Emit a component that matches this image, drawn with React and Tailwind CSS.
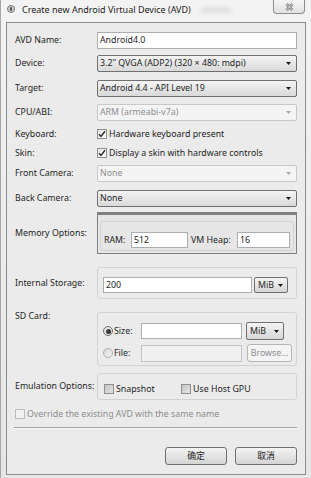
import React from 'react'

function Arrow({ disabled }) {
  return (
    <svg width="5" height="3" viewBox="0 0 5 3" className="shrink-0">
      <polygon points="0,0 5,0 2.5,3" fill={disabled ? '#a8a8a8' : '#1a1a1a'} />
    </svg>
  )
}

function TextBox({ value = '', disabled, className = '' }) {
  return (
    <div
      className={`flex items-center border px-[2px] ${
        disabled ? 'border-[#c4c4c4] bg-[#f0f0f0]' : 'border-[#abadb3] bg-white'
      } ${className}`}
    >
      <span className="leading-none">{value}</span>
    </div>
  )
}

function Select({ value, disabled }) {
  return (
    <div
      className={`flex h-[17px] items-center justify-between rounded-[2px] border pl-[2px] pr-[5px] ${
        disabled
          ? 'border-[#c8c8c8] bg-[#f4f4f4] text-[#8d8d8d]'
          : 'border-[#707070] bg-gradient-to-b from-[#f4f4f4] to-[#d9d9d9] text-[#1e1e1e]'
      }`}
    >
      <span className="leading-none">{value}</span>
      <Arrow disabled={disabled} />
    </div>
  )
}

function Combo({ className = '' }) {
  return (
    <div
      className={`flex items-center justify-between rounded-[2px] border border-[#707070] bg-gradient-to-b from-[#f4f4f4] to-[#d6d6d6] pl-[3px] pr-[4px] ${className}`}
    >
      <span className="leading-none">MiB</span>
      <Arrow />
    </div>
  )
}

function Check({ checked, disabled }) {
  return (
    <div
      className={`flex h-[10px] w-[10px] shrink-0 items-center justify-center border ${
        disabled
          ? 'border-[#bcbcbc] bg-[#f2f2f2]'
          : checked
          ? 'border-[#8e8f8f] bg-gradient-to-br from-[#e2e2e2] to-[#ffffff]'
          : 'border-[#8e8f8f] bg-gradient-to-br from-[#c4c4c4] to-[#e4e4e4]'
      }`}
    >
      {checked && (
        <svg width="8" height="8" viewBox="0 0 8 8">
          <path d="M1 4.2 L3 6.4 L7 1.2" fill="none" stroke="#2a2a2a" strokeWidth="1.4" />
        </svg>
      )}
    </div>
  )
}

function Radio({ checked }) {
  return (
    <div
      className={`flex h-[10px] w-[10px] shrink-0 items-center justify-center rounded-full border ${
        checked ? 'border-[#6f6f6f] bg-[#e6e6e6]' : 'border-[#b0b0b0] bg-gradient-to-br from-[#d8d8d8] to-[#f4f4f4]'
      }`}
    >
      {checked && <div className="h-[5px] w-[5px] rounded-full bg-gradient-to-br from-[#555] to-[#1e1e1e]" />}
    </div>
  )
}

function Row({ label, top = 0, align = 'items-center', children }) {
  return (
    <div className={`flex ${align}`} style={{ marginTop: top }}>
      <div className="w-[82px] shrink-0 leading-none">{label}</div>
      <div className="w-[200px] shrink-0">{children}</div>
    </div>
  )
}

function Button({ children }) {
  return (
    <div className="flex h-[18px] w-[62px] items-center justify-center rounded-[3px] border border-[#707070] bg-gradient-to-b from-[#f4f4f4] to-[#d4d4d4] leading-none">
      {children}
    </div>
  )
}

export default function App() {
  return (
    <div className="flex h-[478px] w-[311px] flex-col overflow-hidden border-l border-[#a6a6a6] bg-gradient-to-b from-[#f3f3f3] to-[#e6e6e6] font-['Noto_Sans','Noto_Sans_CJK_SC',sans-serif] text-[8.8px] text-[#1e1e1e]">
      {/* Title bar */}
      <div className="flex h-[22px] shrink-0 items-start">
        <div className="mt-[5px] ml-[6px] flex h-[8px] w-[8px] items-center justify-center rounded-full border border-[#7a7a7a] bg-[#cfcfcf]">
          <div className="h-[4px] w-[2px] rounded-full bg-[#555]" />
        </div>
        <span className="mt-[5px] ml-[7px] text-[9px] leading-none text-[#222]">Create new Android Virtual Device (AVD)</span>
        <span className="mt-[8px] ml-[10px] h-[4px] w-[30px] rounded-full bg-[#d6d6d6] blur-[2px]" />
        <div className="ml-auto mr-[6px] flex h-[14px] w-[32px] items-center justify-center rounded-b-[4px] border border-t-0 border-[#8d8d8d] bg-gradient-to-b from-[#f6f6f6] to-[#e2e2e2]">
          <svg width="9" height="8" viewBox="0 0 9 8">
            <path d="M1.5 1 L7.5 7 M7.5 1 L1.5 7" stroke="#7c7c7c" strokeWidth="2.6" />
            <path d="M1.5 1 L7.5 7 M7.5 1 L1.5 7" stroke="#f4f4f4" strokeWidth="0.9" />
          </svg>
        </div>
      </div>

      {/* Content panel */}
      <div className="ml-[5px] flex h-[453px] w-[300px] flex-col border border-[#8c8c8c] bg-[#ebebeb] pl-[8px] pt-[9px]">
        <Row label="AVD Name:">
          <TextBox value="Android4.0" className="h-[17px]" />
        </Row>
        <Row label="Device:" top={6}>
          <Select value={'3.2" QVGA (ADP2) (320 × 480: mdpi)'} />
        </Row>
        <Row label="Target:" top={8}>
          <Select value="Android 4.4 - API Level 19" />
        </Row>
        <Row label="CPU/ABI:" top={7}>
          <Select value="ARM (armeabi-v7a)" disabled />
        </Row>
        <Row label="Keyboard:" top={6}>
          <div className="flex h-[14px] items-center gap-[2px]">
            <Check checked />
            <span className="leading-none">Hardware keyboard present</span>
          </div>
        </Row>
        <Row label="Skin:" top={5}>
          <div className="flex h-[14px] items-center gap-[2px]">
            <Check checked />
            <span className="leading-none">Display a skin with hardware controls</span>
          </div>
        </Row>
        <Row label="Front Camera:" top={5}>
          <Select value="None" disabled />
        </Row>
        <Row label="Back Camera:" top={8}>
          <Select value="None" />
        </Row>

        <Row label="Memory Options:" top={5}>
          <div className="flex h-[42px] flex-col border border-t-[3px] border-[#7f7f7f] bg-[#e6e6e6] px-[2px] pt-[6px]">
            <div className="flex h-[30px] items-end rounded-[3px] border border-[#d3d3d3] pb-[2px] pl-[3px]">
              <div className="flex h-[16px] items-center">
                <span className="w-[27px] leading-none">RAM:</span>
                <TextBox value="512" className="h-[16px] w-[57px]" />
                <span className="ml-[3px] w-[46px] leading-none">VM Heap:</span>
                <TextBox value="16" className="h-[16px] w-[53px]" />
              </div>
            </div>
          </div>
        </Row>

        <Row label="Internal Storage:" top={13}>
          <div className="flex h-[32px] items-end rounded-[3px] border border-[#d3d3d3] pb-[5px] pl-[5px]">
            <TextBox value="200" className="h-[16px] w-[149px]" />
            <Combo className="ml-[2px] h-[16px] w-[34px]" />
          </div>
        </Row>

        <Row label="SD Card:" top={13} align="items-start">
          <div className="flex h-[54px] flex-col gap-[4px] rounded-[3px] border border-[#d3d3d3] pl-[5px] pt-[9px]">
            <div className="flex h-[18px] items-center">
              <div className="flex w-[38px] items-center gap-[1px]">
                <Radio checked />
                <span className="leading-none">Size:</span>
              </div>
              <TextBox className="h-[16px] w-[101px]" />
              <Combo className="ml-[4px] h-[18px] w-[38px]" />
            </div>
            <div className="flex h-[18px] items-center">
              <div className="flex w-[38px] items-center gap-[1px]">
                <Radio />
                <span className="leading-none">File:</span>
              </div>
              <TextBox disabled className="h-[17px] w-[101px]" />
              <div className="ml-[5px] flex h-[18px] w-[45px] items-center justify-center rounded-[3px] border border-[#b5b5b5] bg-[#f4f4f4] leading-none text-[#8d8d8d]">
                Browse...
              </div>
            </div>
          </div>
        </Row>

        <Row label="Emulation Options:" top={7}>
          <div className="flex h-[27px] items-end rounded-[3px] border border-[#d3d3d3] pb-[5px] pl-[6px]">
            <div className="flex w-[77px] items-center gap-[2px]">
              <Check />
              <span className="leading-none">Snapshot</span>
            </div>
            <div className="flex items-center gap-[2px]">
              <Check />
              <span className="leading-none">Use Host GPU</span>
            </div>
          </div>
        </Row>

        <div className="mt-[8px] flex h-[12px] items-center gap-[2px] text-[#8d8d8d]">
          <Check disabled />
          <span className="leading-none">Override the existing AVD with the same name</span>
        </div>

        <div className="mt-[7px] mr-[8px] -ml-[1px] border-t border-b border-t-[#a3a3a3] border-b-[#fafafa]" />

        <div className="mt-[18px] mr-[8px] flex justify-end gap-[8px]">
          <Button>确定</Button>
          <Button>取消</Button>
        </div>
      </div>
    </div>
  )
}
